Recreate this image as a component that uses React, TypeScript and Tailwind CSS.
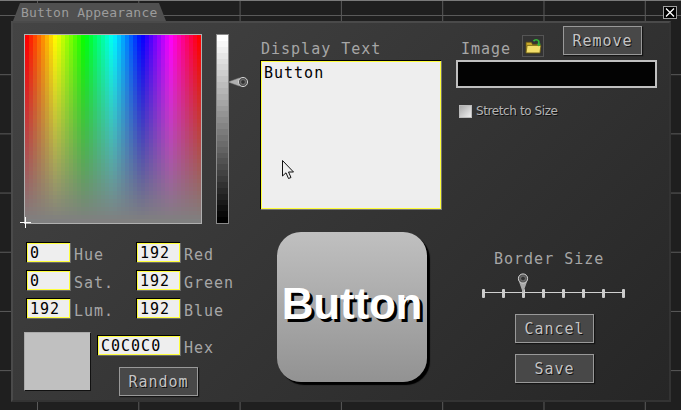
const mono = "font-['DejaVu_Sans_Mono',monospace]";

const hueCells = Array.from({ length: 47 * 44 }, (_, i) => {
  const row = Math.floor(i / 44);
  const col = i % 44;
  const sat = 100 - (row / 46) * 100;
  return `hsl(${(col / 43) * 360} ${sat}% 50%)`;
});

const lumSteps = Array.from({ length: 32 }, (_, i) => {
  const v = Math.round(255 - (i / 31) * 255);
  return `rgb(${v} ${v} ${v})`;
});

const Label = ({ children, className = "" }: { children: React.ReactNode; className?: string }) => (
  <span className={`${mono} text-[15px] tracking-[1px] text-[#a6a6a6] ${className}`}>{children}</span>
);

const Field = ({ value, label, width = "w-[45px]" }: { value: string; label: string; width?: string }) => (
  <div className="flex items-center gap-[3px] h-[21px]">
    <div className={`${width} h-[21px] border border-t-black border-l-black border-r-[#6a6a6a] border-b-[#6a6a6a]`}>
      <div className={`h-[19px] bg-[#eeeeee] border border-[#ffff3c] pl-[2px] pt-[1px] ${mono} text-[15px] leading-[16px] tracking-[1px] text-black`}>
        {value}
      </div>
    </div>
    <Label className="block pt-[4px] leading-[16px]">{label}</Label>
  </div>
);

const PanelButton = ({ children }: { children: React.ReactNode }) => (
  <div className={`w-[79px] h-[29px] flex items-center justify-center pt-[1px] bg-[#484848] border border-[#999999] shadow-[1px_1px_1px_#151515] ${mono} text-[15px] tracking-[1px] text-[#c4c4c4] [text-shadow:1px_1px_0_#111]`}>
    {children}
  </div>
);

const Thumb = () => (
  <svg width="24" height="16" viewBox="0 0 24 16">
    <path d="M1 8 L12 4 H16 A4 4 0 0 1 16 12 H12 Z" fill="#b0b0b0" stroke="#777" strokeWidth="0.5" />
    <circle cx="16" cy="8" r="4.6" fill="#555" stroke="#cfcfcf" strokeWidth="1" />
    <circle cx="16" cy="8" r="2.4" fill="#333" stroke="#888" strokeWidth="0.7" />
  </svg>
);

const App = () => {
  return (
    <div className="relative w-[681px] h-[410px] overflow-hidden bg-[#1f1f1f] bg-[linear-gradient(#5a5a5a_1px,transparent_1px),linear-gradient(90deg,#5a5a5a_1px,transparent_1px)] bg-[size:101.3px_59.2px] bg-[position:37px_15px]">
      <div className="h-[3px] border-t border-[#7a7a7a]"></div>
      {/* tab */}
      <div className="ml-[13px] w-[153px] h-[18px] bg-[#505050] [clip-path:polygon(7px_0,146px_0,100%_100%,0_100%)] relative">
        <span className={`absolute left-[8px] top-[1px] ${mono} text-[13px] tracking-[0.2px] leading-[17px] text-[#9c9c9c]`}>Button Appearance</span>
      </div>

      <div className="ml-[11px] w-[660px] h-[381px] bg-[linear-gradient(135deg,#444444,#262626)] border-2 border-t-[#4a4a4a] border-l-[#4a4a4a] border-r-[#333333] border-b-[#333333] flex pl-[11px] pt-[11px]">
        {/* left column */}
        <div className="w-[236px] shrink-0">
          <div className="flex items-start gap-[14px]">
            <div className="w-[178px] h-[190px] border border-[#b0b0b0] grid grid-cols-[repeat(44,4px)] grid-rows-[repeat(47,4px)]">
              {hueCells.map((c, i) => (
                <div key={i} style={{ background: c }}></div>
              ))}
            </div>
            <div className="relative w-[13px] h-[190px] border border-[#8a8a8a] flex flex-col">
              {lumSteps.map((c, i) => (
                <div key={i} className="flex-1" style={{ background: c }}></div>
              ))}
              <div className="absolute left-[10px] top-[39px]">
                <Thumb />
              </div>
            </div>
          </div>

          <div className="ml-[2px] mt-[18px] grid grid-cols-[110px_1fr] gap-y-[7px]">
            <Field value="0" label="Hue" />
            <Field value="192" label="Red" />
            <Field value="0" label="Sat." />
            <Field value="192" label="Green" />
            <Field value="192" label="Lum." />
            <Field value="192" label="Blue" />
          </div>

          <div className="flex mt-[13px]">
            <div className="w-[67px] h-[59px] bg-[#c0c0c0] border border-[#aaaaaa] border-r-[#111] border-b-[#111]"></div>
            <div className="ml-[6px] pt-[3px]">
              <Field value="C0C0C0" label="Hex" width="w-[84px]" />
              <div className="ml-[22px] mt-[11px]">
                <PanelButton>Random</PanelButton>
              </div>
            </div>
          </div>
        </div>

        {/* center column */}
        <div className="w-[182px] shrink-0">
          <Label className="block ml-[1px] mt-[5px] h-[21px] leading-5">Display Text</Label>
          <div className="w-[182px] h-[150px] border border-t-black border-l-black border-r-[#777] border-b-[#777]">
            <div className={`h-[148px] bg-[#eeeeee] border border-[#ffff3c] pl-[2px] pt-[1px] ${mono} text-[15px] leading-[20px] tracking-[1px] text-black`}>
              Button
            </div>
          </div>
          <div className="ml-[17px] mt-[22px] w-[150px] h-[150px] rounded-[24px] bg-[linear-gradient(#c0c0c0,#929292)] shadow-[3px_3px_1px_#000] flex items-center justify-center pb-[6px] font-['Liberation_Sans',sans-serif] font-bold text-[44px] tracking-[-0.2px] text-white [text-shadow:3px_3px_0_#000]">
            Button
          </div>
        </div>

        {/* right column */}
        <div className="w-[201px] shrink-0 ml-[14px]">
          <div className="flex items-start h-[39px]">
            <Label className="ml-[5px] mt-[5px] w-[61px] leading-5">Image</Label>
            <div className="mt-[1px] w-[22px] h-[22px] flex items-center justify-center bg-[#333] border border-[#555]">
              <svg width="17" height="17" viewBox="0 0 16 16">
                <path d="M1 4 H6 L7 6 H14 V14 H1 Z" fill="#c9a92a" stroke="#6b5a10" strokeWidth="0.7" />
                <path d="M1 14 L2 7 H15 L14 14 Z" fill="#f3df6a" stroke="#6b5a10" strokeWidth="0.7" />
                <path d="M8 3 A3 3 0 0 1 13 3 V6" fill="none" stroke="#35b53a" strokeWidth="1.6" />
                <path d="M11 5.5 H15 L13 8 Z" fill="#35b53a" />
              </svg>
            </div>
            <div className="ml-[19px] mt-[-8px]">
              <PanelButton>Remove</PanelButton>
            </div>
          </div>
          <div className="mt-[-13px] h-[28px] w-[201px] bg-[#030303] border-2 border-[#c0c0c0]"></div>
          <div className="flex items-center mt-[16px] ml-[3px] gap-[4px]">
            <div className="w-[13px] h-[13px] bg-[linear-gradient(135deg,#aaaaaa,#eeeeee)] border border-[#bbbbbb]"></div>
            <span className="font-['DejaVu_Sans',sans-serif] text-[12px] leading-[14px] tracking-[-0.4px] text-[#b4b4b4] [text-shadow:1px_1px_0_#111]">Stretch to Size</span>
          </div>

          <div className="ml-[38px] mt-[130px] leading-5">
            <Label className="leading-5">Border Size</Label>
          </div>
          <div className="relative ml-[26px] mt-[19px] w-[143px] h-[10px] flex items-center justify-between">
            <div className="absolute left-0 right-0 top-[4px] h-px bg-[#d0d0d0]"></div>
            {[0, 1, 2, 3, 4, 5, 6, 7].map((n) => (
              <div key={n} className="relative w-[3px] h-[9px] rounded-[1px] bg-[#cccccc]"></div>
            ))}
            <div className="absolute left-[35px] top-[-15px]">
              <svg width="12" height="21" viewBox="0 0 12 21">
                <path d="M1 6 A5 5 0 0 1 11 6 L6 20 Z" fill="#a8a8a8" />
                <circle cx="6" cy="5.5" r="4.6" fill="#555" stroke="#cfcfcf" strokeWidth="1" />
                <circle cx="6" cy="5.5" r="2.4" fill="#333" stroke="#888" strokeWidth="0.7" />
              </svg>
            </div>
          </div>
          <div className="flex flex-col items-start gap-[11px] mt-[16px] ml-[59px]">
            <PanelButton>Cancel</PanelButton>
            <PanelButton>Save</PanelButton>
          </div>
        </div>
      </div>

      {/* close button */}
      <div className="absolute left-[663px] top-[6px] w-[14px] h-[13px] bg-black border border-[#a0a0a0] flex items-center justify-center">
        <svg width="10" height="9" viewBox="0 0 10 9">
          <path d="M1 0.5 L9 8.5 M9 0.5 L1 8.5" stroke="#ffffff" strokeWidth="1.3" />
        </svg>
      </div>

      {/* colour crosshair */}
      <svg className="absolute left-[20px] top-[217px]" width="11" height="11" viewBox="0 0 11 11">
        <path d="M5.5 0 V11 M0 5.5 H11" stroke="#ffffff" strokeWidth="1" />
      </svg>

      {/* mouse pointer */}
      <svg className="absolute left-[282px] top-[160px]" width="13" height="20" viewBox="0 0 13 20">
        <path d="M0.5 0.5 V16 L4 12.8 L6.5 18.5 L9 17.5 L6.5 12 H11.5 Z" fill="#eeeeee" stroke="#111111" strokeWidth="1" />
      </svg>
    </div>
  );
};

export default App;
